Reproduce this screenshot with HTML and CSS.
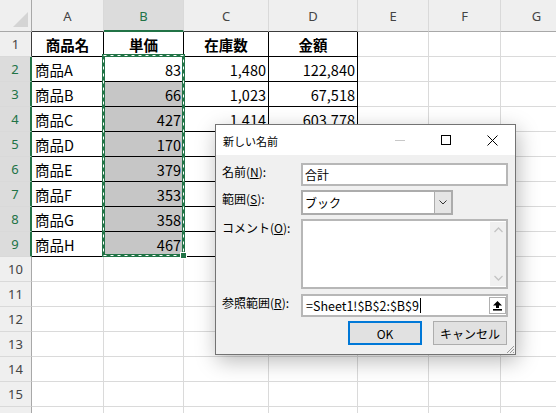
FILE: index.html
```html
<!DOCTYPE html>
<html lang="ja">
<head>
<meta charset="utf-8">
<title>新しい名前</title>
<link rel="stylesheet" href="styles.css">
</head>
<body>
<div class="sheet">
  <div class="grid">
    <div class="corner"><svg class="tri" width="16" height="16" viewBox="0 0 16 16"><polygon points="15,0 15,15 0,15" fill="#d4d4d4"/></svg></div>
    <div class="ch dk">A</div>
    <div class="ch sel">B</div>
    <div class="ch dk">C</div>
    <div class="ch dk">D</div>
    <div class="ch">E</div>
    <div class="ch">F</div>
    <div class="ch">G</div>

    <div class="rh r1">1</div>
    <div class="c t hd">商品名</div><div class="c t hd">単価</div><div class="c t hd">在庫数</div><div class="c t hd">金額</div>
    <div class="c"></div><div class="c"></div><div class="c"></div>

    <div class="rh sel">2</div>
    <div class="c t">商品A</div><div class="c t n">83</div><div class="c t n">1,480</div><div class="c t n">122,840</div>
    <div class="c"></div><div class="c"></div><div class="c"></div>

    <div class="rh sel">3</div>
    <div class="c t">商品B</div><div class="c t n f">66</div><div class="c t n">1,023</div><div class="c t n">67,518</div>
    <div class="c"></div><div class="c"></div><div class="c"></div>

    <div class="rh sel">4</div>
    <div class="c t">商品C</div><div class="c t n f">427</div><div class="c t n">1,414</div><div class="c t n">603,778</div>
    <div class="c"></div><div class="c"></div><div class="c"></div>

    <div class="rh sel">5</div>
    <div class="c t">商品D</div><div class="c t n f">170</div><div class="c t n">1,250</div><div class="c t n">212,500</div>
    <div class="c"></div><div class="c"></div><div class="c"></div>

    <div class="rh sel">6</div>
    <div class="c t">商品E</div><div class="c t n f">379</div><div class="c t n">1,105</div><div class="c t n">418,795</div>
    <div class="c"></div><div class="c"></div><div class="c"></div>

    <div class="rh sel">7</div>
    <div class="c t">商品F</div><div class="c t n f">353</div><div class="c t n">1,342</div><div class="c t n">473,726</div>
    <div class="c"></div><div class="c"></div><div class="c"></div>

    <div class="rh sel">8</div>
    <div class="c t">商品G</div><div class="c t n f">358</div><div class="c t n">1,187</div><div class="c t n">424,946</div>
    <div class="c"></div><div class="c"></div><div class="c"></div>

    <div class="rh sel">9</div>
    <div class="c t">商品H</div><div class="c t n f">467</div><div class="c t n">1,064</div><div class="c t n">496,888</div>
    <div class="c"></div><div class="c"></div><div class="c"></div>

    <div class="rh">10</div><div class="c"></div><div class="c"></div><div class="c"></div><div class="c"></div><div class="c"></div><div class="c"></div><div class="c"></div>
    <div class="rh">11</div><div class="c"></div><div class="c"></div><div class="c"></div><div class="c"></div><div class="c"></div><div class="c"></div><div class="c"></div>
    <div class="rh">12</div><div class="c"></div><div class="c"></div><div class="c"></div><div class="c"></div><div class="c"></div><div class="c"></div><div class="c"></div>
    <div class="rh">13</div><div class="c"></div><div class="c"></div><div class="c"></div><div class="c"></div><div class="c"></div><div class="c"></div><div class="c"></div>
    <div class="rh">14</div><div class="c"></div><div class="c"></div><div class="c"></div><div class="c"></div><div class="c"></div><div class="c"></div><div class="c"></div>
    <div class="rh">15</div><div class="c"></div><div class="c"></div><div class="c"></div><div class="c"></div><div class="c"></div><div class="c"></div><div class="c"></div>
    <div class="rh"></div><div class="c"></div><div class="c"></div><div class="c"></div><div class="c"></div><div class="c"></div><div class="c"></div><div class="c"></div>
  </div>

  <svg class="marquee" width="83" height="203" viewBox="0 0 83 203">
    <rect x="1.5" y="1.5" width="80" height="200" fill="none" stroke="#217346" stroke-width="3"/>
    <rect x="1.5" y="1.5" width="80" height="200" fill="none" stroke="#ffffff" stroke-width="1" stroke-dasharray="3 4"/>
  </svg>
  <div class="handle"></div>

  <div class="dialog">
    <div class="titlebar">
      <span class="title">新しい名前</span>
      <div class="wbtn"><svg width="10" height="10" viewBox="0 0 10 10"><line x1="0" y1="5.5" x2="10" y2="5.5" stroke="#c8c8c8" stroke-width="1"/></svg></div>
      <div class="wbtn"><svg width="10" height="10" viewBox="0 0 10 10"><rect x="0.5" y="0.5" width="9" height="9" fill="none" stroke="#000" stroke-width="1"/></svg></div>
      <div class="wbtn"><svg width="11" height="11" viewBox="0 0 11 11"><path d="M0.5 0.5 L10.5 10.5 M10.5 0.5 L0.5 10.5" stroke="#000" stroke-width="1"/></svg></div>
    </div>
    <div class="dbody">
      <div class="form">
        <div class="lbl">名前(<u>N</u>):</div>
        <div class="field">合計</div>

        <div class="lbl">範囲(<u>S</u>):</div>
        <div class="combo">
          <span class="combo-text">ブック</span>
          <span class="drop"><svg width="8" height="5" viewBox="0 0 8 5"><polyline points="0.5,0.5 4,4 7.5,0.5" fill="none" stroke="#333" stroke-width="1"/></svg></span>
        </div>

        <div class="lbl">コメント(<u>O</u>):</div>
        <div class="memo">
          <div class="vscroll">
            <svg width="9" height="6" viewBox="0 0 9 6"><polyline points="0.5,5 4.5,1 8.5,5" fill="none" stroke="#c4c4c4" stroke-width="1.3"/></svg>
            <svg width="9" height="6" viewBox="0 0 9 6"><polyline points="0.5,1 4.5,5 8.5,1" fill="none" stroke="#c4c4c4" stroke-width="1.3"/></svg>
          </div>
        </div>

        <div class="lbl lref">参照範囲(<u>R</u>):</div>
        <div class="field ref">
          <span class="reftext">=Sheet1!$B$2:$B$9</span><span class="caret"></span>
          <span class="collapse"><svg width="9" height="10" viewBox="0 0 9 10"><polygon points="4.5,0 9,4.5 6,4.5 6,7 3,7 3,4.5 0,4.5" fill="#000"/><rect x="0" y="8" width="9" height="1.6" fill="#000"/></svg></span>
        </div>
      </div>
      <div class="buttons">
        <div class="btn def">OK</div>
        <div class="btn">キャンセル</div>
      </div>
    </div>
    <svg class="grip" width="9" height="9" viewBox="0 0 9 9"><path d="M8 1 L1 8 M8 4 L4 8 M8 7 L7 8" stroke="#9a9a9a" stroke-width="1"/></svg>
  </div>
</div>
</body>
</html>
```

FILE: styles.css
```css
body {
  margin: 0;
  font-family: "Noto Sans CJK JP", sans-serif;
}

.sheet {
  position: relative;
  width: 556px;
  height: 413px;
  overflow: hidden;
  background: #ffffff;
}

.grid {
  display: grid;
  grid-template-columns: 32px 72px 80px 85px 89px 71px 72px 72px;
  grid-template-rows: 32px;
  grid-auto-rows: 25px;
}

.grid > div {
  box-sizing: border-box;
  border-right: 1px solid #dadada;
  border-bottom: 1px solid #dadada;
  display: flex;
  align-items: center;
  overflow: hidden;
  white-space: nowrap;
}

.corner {
  position: relative;
  background: #efefef;
  border-right-color: #a8a8a8 !important;
  border-bottom-color: #a8a8a8 !important;
}

.tri {
  position: absolute;
  left: 13px;
  top: 12px;
}

.ch {
  background: #efefef;
  justify-content: center;
  font-family: "Noto Sans", sans-serif;
  font-size: 13px;
  color: #444444;
  border-right-color: #d9d9d9 !important;
  border-bottom-color: #a8a8a8 !important;
  padding-top: 1px;
}

.ch.dk {
  border-bottom-color: #3c3c3c !important;
}

.ch.sel {
  background: #dcdcdc;
  color: #217346;
  border-bottom: 2px solid #217346 !important;
}

.rh {
  background: #efefef;
  justify-content: center;
  font-family: "Noto Sans", sans-serif;
  font-size: 13px;
  color: #444444;
  border-right-color: #a8a8a8 !important;
  border-bottom-color: #d9d9d9 !important;
}

.rh.r1 {
  border-right-color: #3c3c3c !important;
}

.rh.sel {
  background: #dcdcdc;
  color: #217346;
  border-right: 2px solid #217346 !important;
}

.c {
  font-size: 14.5px;
  line-height: 18px;
  padding: 1px 3px 0 3px;
  color: #000000;
}

.t {
  border-right-color: #000000 !important;
  border-bottom-color: #000000 !important;
}

.hd {
  font-weight: bold;
  justify-content: center;
}

.n {
  justify-content: flex-end;
  padding-right: 2px;
}

.f {
  background: #c6c6c6;
}

.marquee {
  position: absolute;
  left: 102px;
  top: 54px;
}

.handle {
  position: absolute;
  left: 180px;
  top: 252px;
  width: 5px;
  height: 5px;
  background: #217346;
  border: 1px solid #ffffff;
}

/* dialog */
.dialog {
  position: absolute;
  left: 215px;
  top: 124px;
  width: 301px;
  height: 231px;
  box-sizing: border-box;
  border: 1px solid #737373;
  background: #f0f0f0;
  box-shadow: 2px 6px 20px rgba(0, 0, 0, 0.28);
  font-size: 12px;
  color: #000000;
  display: flex;
  flex-direction: column;
}

.titlebar {
  height: 30px;
  background: #ffffff;
  display: flex;
  align-items: center;
}

.title {
  flex: 1;
  padding-left: 7px;
  font-size: 11px;
  padding-top: 1px;
}

.wbtn {
  width: 46px;
  height: 30px;
  display: flex;
  align-items: center;
  justify-content: center;
}

.dbody {
  padding: 8px 7px 0 6px;
}

.form {
  display: grid;
  grid-template-columns: 79px 207px;
  row-gap: 4px;
}

.lbl {
  line-height: 14px;
  padding-top: 2px;
  white-space: nowrap;
}

.lref {
  margin-top: 1px;
}

.field {
  height: 23px;
  box-sizing: border-box;
  border: 2px solid #b7b7b7;
  background: #ffffff;
  display: flex;
  align-items: center;
  padding-left: 2px;
  font-size: 12px;
}

.combo {
  width: 152px;
  height: 25px;
  box-sizing: border-box;
  border: 2px solid #acacac;
  background: #ffffff;
  display: flex;
  align-items: center;
}

.combo-text {
  flex: 1;
  padding-left: 2px;
}

.drop {
  width: 16px;
  align-self: stretch;
  background: #e5e5e5;
  border-left: 1px solid #acacac;
  display: flex;
  align-items: center;
  justify-content: center;
}

.memo {
  height: 70px;
  box-sizing: border-box;
  border: 2px solid #b7b7b7;
  background: #ffffff;
  display: flex;
  justify-content: flex-end;
}

.vscroll {
  width: 16px;
  background: #f0f0f0;
  display: flex;
  flex-direction: column;
  align-items: center;
  justify-content: space-between;
  padding: 5px 0 5px;
  box-sizing: border-box;
  margin: 1px 0;
}

.ref {
  margin-top: 1px;
  padding-right: 0;
}

.reftext {
  font-size: 12.5px;
  padding-left: 1px;
}

.caret {
  width: 1px;
  height: 15px;
  background: #000000;
  margin-left: 1px;
}

.collapse {
  margin-left: auto;
  width: 17px;
  height: 17px;
  box-sizing: border-box;
  border: 1px solid #b0b0b0;
  background: #ffffff;
  display: flex;
  align-items: center;
  justify-content: center;
  margin-right: 0;
}

.buttons {
  display: flex;
  justify-content: flex-end;
  gap: 11px;
  margin-top: 4px;
  padding-right: 1px;
}

.btn {
  width: 74px;
  height: 24px;
  box-sizing: border-box;
  border: 1px solid #adadad;
  background: #e1e1e1;
  display: flex;
  align-items: center;
  justify-content: center;
  font-size: 12px;
}

.btn.def {
  border: 2px solid #0078d7;
}

.grip {
  position: absolute;
  right: 0;
  bottom: 0;
}
```
